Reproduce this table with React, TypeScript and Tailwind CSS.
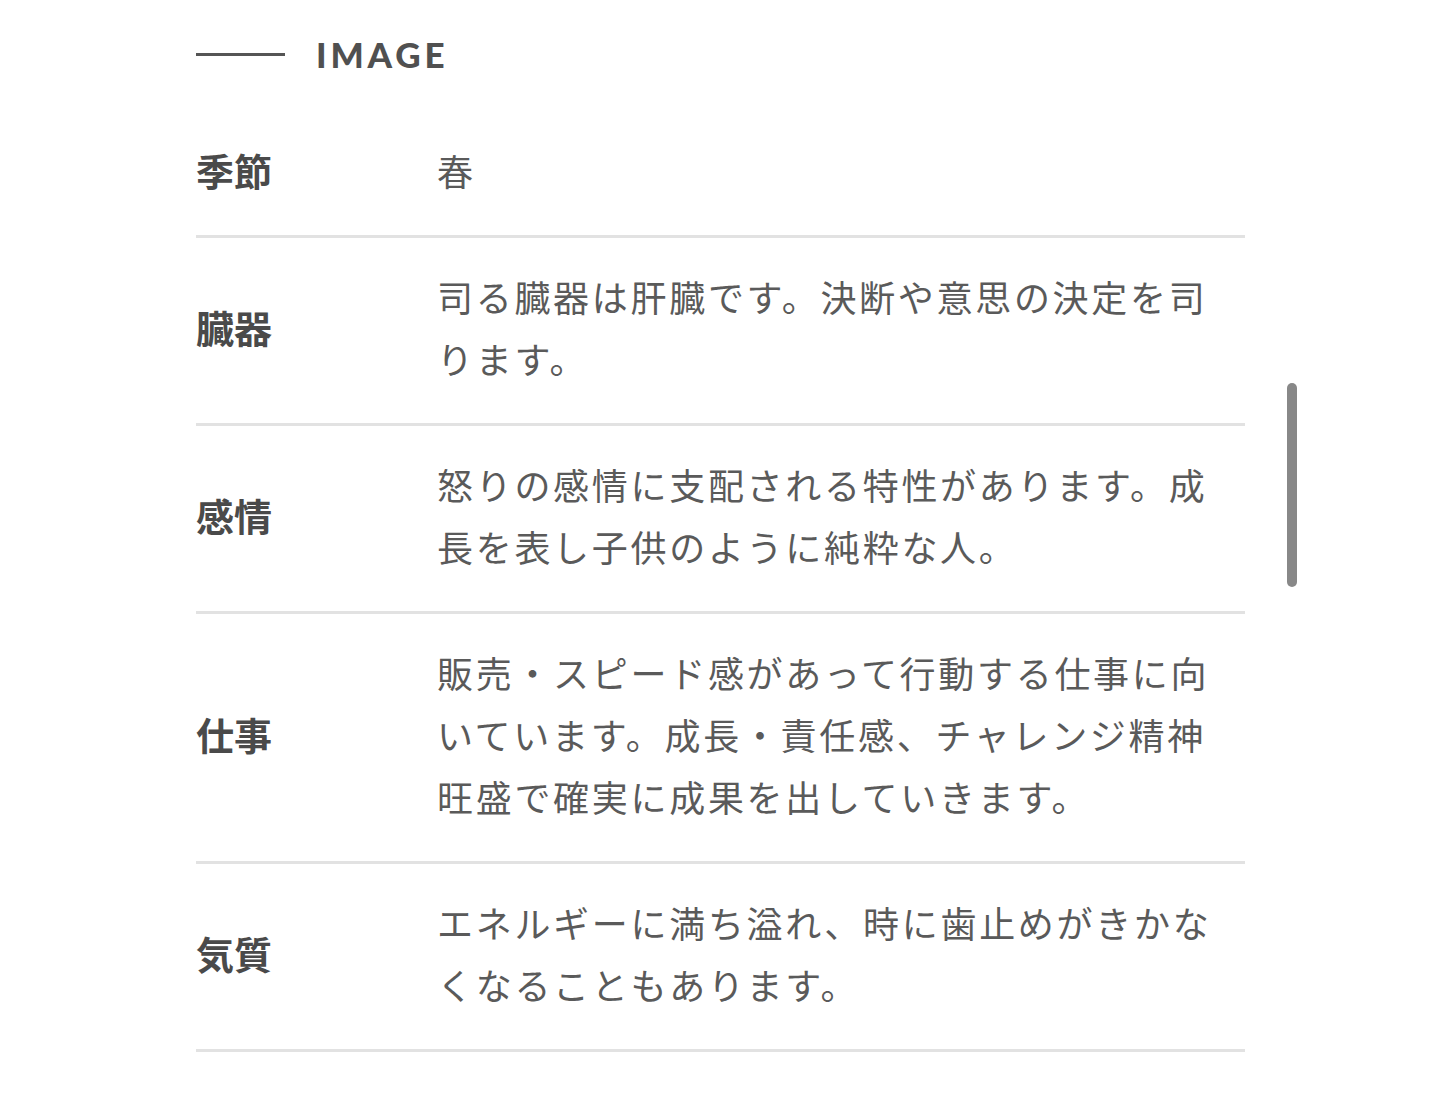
import React from 'react';

interface Row {
  label: string;
  text: string;
}

const rows: Row[] = [
  { label: '季節', text: '春' },
  { label: '臓器', text: '司る臓器は肝臓です。決断や意思の決定を司ります。' },
  { label: '感情', text: '怒りの感情に支配される特性があります。成長を表し子供のように純粋な人。' },
  { label: '仕事', text: '販売・スピード感があって行動する仕事に向いています。成長・責任感、チャレンジ精神旺盛で確実に成果を出していきます。' },
  { label: '気質', text: 'エネルギーに満ち溢れ、時に歯止めがきかなくなることもあります。' },
];

const jp = { fontFamily: '"Noto Sans CJK JP", "Noto Sans", sans-serif' };

export default function App() {
  return (
    <div className="relative min-h-[1102px] w-full bg-white">
      <div className="ml-[196px] w-[1049px] pt-[36px]">
        {/* section title */}
        <div className="flex h-[36px] items-center gap-[31px]">
          <span className="block h-[3px] w-[89px] bg-[#555555]" />
          <h2
            className="text-[35px] font-black leading-none tracking-[0.11em] text-[#505050]"
            style={{ fontFamily: 'Lato, "Open Sans", sans-serif' }}
          >
            IMAGE
          </h2>
        </div>

        <dl className="mt-[40px]" style={jp}>
          {rows.map((row) => (
            <div
              key={row.label}
              className="grid grid-cols-[241px_795px] items-center border-b-[3px] border-[#e2e2e2] pt-[27px] pb-[34px]"
            >
              <dt className="text-[38px] font-bold leading-[62px] text-[#4a4a4a]">{row.label}</dt>
              <dd className="text-[36px] leading-[62px] tracking-[0.075em] text-[#5a5a5a]">{row.text}</dd>
            </div>
          ))}
        </dl>
      </div>

      {/* scroll indicator */}
      <div className="absolute left-[1287px] top-[383px] h-[204px] w-[10px] rounded-full bg-[#888888]" />
    </div>
  );
}
